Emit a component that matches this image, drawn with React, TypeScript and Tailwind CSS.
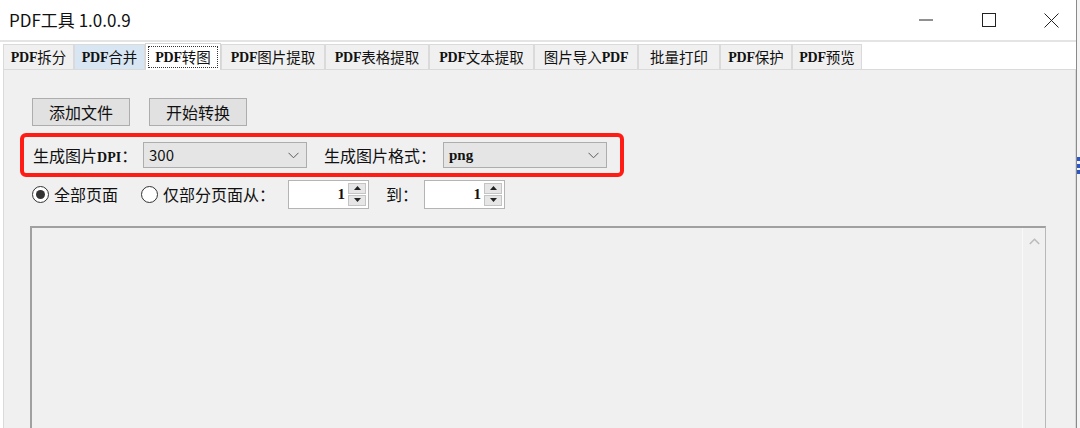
import React from "react";

const cjk = { fontFamily: '"Noto Sans CJK SC", "Noto Sans", sans-serif' };
const serif = { fontFamily: '"Liberation Serif", "Noto Sans CJK SC", serif' };

const tabs = [
  { label: "PDF拆分", w: "w-[71px]" },
  { label: "PDF合并", w: "w-[71px]", hover: true },
  { label: "PDF转图", w: "w-[76px]", active: true },
  { label: "PDF图片提取", w: "w-[104px]" },
  { label: "PDF表格提取", w: "w-[104px]" },
  { label: "PDF文本提取", w: "w-[105px]" },
  { label: "图片导入PDF", w: "w-[104px]" },
  { label: "批量打印", w: "w-[82px]" },
  { label: "PDF保护", w: "w-[72px]" },
  { label: "PDF预览", w: "w-[70px]" },
];

// latin runs get the bitmap-ish bold serif look, chinese stays plain
function Mixed({ text, size = "text-[14px]" }: { text: string; size?: string }) {
  const parts = text.split(/([A-Za-z0-9]+)/).filter(Boolean);
  return (
    <>
      {parts.map((p, i) =>
        /[A-Za-z0-9]/.test(p) ? (
          <span key={i} className={`font-bold ${size} tracking-[-0.2px]`} style={serif}>
            {p}
          </span>
        ) : (
          <span key={i} className="text-[14.5px]" style={cjk}>
            {p}
          </span>
        )
      )}
    </>
  );
}

function Chevron() {
  return (
    <svg width="11" height="7" viewBox="0 0 11 7">
      <path d="M0.5 0.8 L5.5 5.8 L10.5 0.8" fill="none" stroke="#5a5a5a" strokeWidth="1" />
    </svg>
  );
}

function Combo({ value, w, serifText }: { value: string; w: string; serifText?: boolean }) {
  return (
    <div className={`${w} h-[26px] bg-[#e5e5e5] border border-[#adadad] flex items-center justify-between pl-[5px] pr-[7px]`}>
      {serifText ? (
        <span className="text-[15px] font-bold text-[#111]" style={serif}>{value}</span>
      ) : (
        <span className="text-[15px] text-[#111]" style={cjk}>{value}</span>
      )}
      <Chevron />
    </div>
  );
}

function Spin({ value }: { value: string }) {
  return (
    <div className="w-[81px] h-[29px] bg-white border border-[#b4b4b4] flex items-center pr-[2px]">
      <span className="flex-1 text-right pr-[3px] text-[15px] font-bold text-[#111]" style={serif}>{value}</span>
      <div className="flex flex-col w-[18px] h-[23px] gap-px">
        <div className="flex-1 bg-[#e6e6e6] border border-[#c4c4c4] flex items-center justify-center">
          <svg width="7" height="4" viewBox="0 0 7 4"><path d="M0 4 L3.5 0 L7 4 Z" fill="#222" /></svg>
        </div>
        <div className="flex-1 bg-[#e6e6e6] border border-[#c4c4c4] flex items-center justify-center">
          <svg width="7" height="4" viewBox="0 0 7 4"><path d="M0 0 L3.5 4 L7 0 Z" fill="#222" /></svg>
        </div>
      </div>
    </div>
  );
}

function Radio({ checked, label }: { checked?: boolean; label: string }) {
  return (
    <div className="flex items-center gap-[5px]">
      <div className="w-[17px] h-[17px] rounded-full border border-[#333] bg-white flex items-center justify-center">
        {checked && <div className="w-[9px] h-[9px] rounded-full bg-[#333]" />}
      </div>
      <span className="text-[16px] text-[#111]" style={cjk}>{label}</span>
    </div>
  );
}

export default function App() {
  return (
    <div className="w-[1080px] h-[428px] overflow-hidden bg-white flex">
      <div className="w-[1076px] flex flex-col">
        {/* title bar */}
        <div className="h-[40px] flex items-center justify-between shrink-0">
          <span className="pl-[9px] text-[17px] text-[#111]" style={cjk}>PDF工具 1.0.0.9</span>
          <div className="flex items-center h-full">
            <div className="w-[63px] h-full flex items-center justify-center">
              <svg width="14" height="2" viewBox="0 0 14 2"><path d="M0 1 H14" stroke="#222" strokeWidth="1" /></svg>
            </div>
            <div className="w-[63px] h-full flex items-center justify-center">
              <svg width="14" height="14" viewBox="0 0 14 14"><rect x="0.5" y="0.5" width="13" height="13" fill="none" stroke="#222" strokeWidth="1" /></svg>
            </div>
            <div className="w-[63px] h-full flex items-center justify-center mr-[-7px]">
              <svg width="15" height="15" viewBox="0 0 15 15"><path d="M0.5 0.5 L14.5 14.5 M14.5 0.5 L0.5 14.5" stroke="#222" strokeWidth="1" /></svg>
            </div>
          </div>
        </div>
        <div className="h-[2px] bg-[#e4e4e4] shrink-0" />

        {/* tab strip */}
        <div className="h-[27px] flex items-end pl-[3px] shrink-0">
          {tabs.map((t) =>
            t.active ? (
              <div key={t.label} className={`${t.w} h-[27px] bg-white border border-b-0 border-[#d6d6d6] p-[2px] relative z-10 -mb-px`}>
                <div className="h-full border border-dotted border-[#333] flex items-center justify-center text-[#111]">
                  <Mixed text={t.label} />
                </div>
              </div>
            ) : (
              <div
                key={t.label}
                className={`${t.w} h-[25px] border border-b-0 border-[#dadada] flex items-center justify-center text-[#111] ${t.hover ? "bg-[#d8e6f3]" : "bg-[#f0f0f0]"}`}
              >
                <Mixed text={t.label} />
              </div>
            )
          )}
        </div>

        {/* tab page */}
        <div className="flex-1 ml-[3px] bg-[#f0f0f0] border border-b-0 border-[#dadada] flex flex-col">
          <div className="flex gap-[19px] pl-[28px] pt-[28px]">
            <button className="w-[98px] h-[28px] bg-[#e1e1e1] border border-[#adadad] text-[16px] text-[#111]" style={cjk}>添加文件</button>
            <button className="w-[98px] h-[28px] bg-[#e1e1e1] border border-[#adadad] text-[16px] text-[#111]" style={cjk}>开始转换</button>
          </div>

          <div className="ml-[16px] mt-[7px] w-[604px] h-[44px] border-[4px] border-[#ff1c14] rounded-[6px] flex items-center pl-[9px]">
            <span className="w-[110px] text-[#111] whitespace-nowrap">
              <span className="text-[16px]" style={cjk}>生成图片</span>
              <span className="text-[14px] font-bold" style={serif}>DPI</span>
              <span className="text-[16px]" style={cjk}>：</span>
            </span>
            <Combo value="300" w="w-[164px]" />
            <span className="ml-[17px] w-[119px] text-[16px] text-[#111]" style={cjk}>生成图片格式：</span>
            <Combo value="png" w="w-[164px]" serifText />
          </div>

          <div className="flex items-center h-[30px] mt-[2px] pl-[28px]">
            <Radio checked label="全部页面" />
            <div className="ml-[23px]"><Radio label="仅部分页面从：" /></div>
            <div className="ml-[13px]"><Spin value="1" /></div>
            <span className="ml-[17px] w-[38px] text-[16px] text-[#111]" style={cjk}>到：</span>
            <Spin value="1" />
          </div>

          {/* log box */}
          <div className="mt-[17px] ml-[26px] w-[1016px] flex-1 border-t-2 border-l-2 border-[#a0a0a0] border-r border-r-[#b8b8b8] flex">
            <div className="flex-1 bg-[#f0f0f0]" />
            <div className="w-[23px] bg-[#f0f0f0] border-l border-[#f8f8f8] flex justify-center pt-[10px]">
              <svg width="11" height="7" viewBox="0 0 11 7"><path d="M0.8 6 L5.5 1.3 L10.2 6" fill="none" stroke="#bcbcbc" strokeWidth="1.6" /></svg>
            </div>
          </div>
        </div>
      </div>
      <div className="w-px bg-[#8a8a8a]" />
      <div className="flex-1 bg-[#f4f4f4] flex flex-col">
        <div className="h-[157px]" />
        <div className="h-[4px] bg-[#2a56c6] w-[3px]" />
        <div className="h-[3px]" />
        <div className="h-[4px] bg-[#2a56c6] w-[3px]" />
        <div className="h-[2px]" />
        <div className="h-[4px] bg-[#2a56c6] w-[3px]" />
      </div>
    </div>
  );
}
